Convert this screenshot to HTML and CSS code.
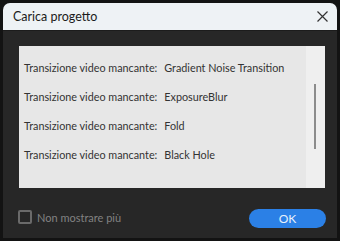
FILE: index.html
```html
<!DOCTYPE html>
<html lang="it">
<head>
    <meta charset="UTF-8">
    <meta name="viewport" content="width=device-width, initial-scale=1.0">
    <title>Carica progetto</title>
    <link rel="stylesheet" href="styles.css">
</head>
<body>
    <div class="dialog">
        <div class="titlebar">
            <span class="title">Carica progetto</span>
            <button class="close" aria-label="Chiudi">
                <svg width="11" height="11" viewBox="0 0 11 11">
                    <path d="M0.5 0.5 L10.5 10.5 M10.5 0.5 L0.5 10.5" stroke="#333" stroke-width="1.2" fill="none"/>
                </svg>
            </button>
        </div>

        <div class="content">
            <div class="list">
                <div class="rows">
                    <div class="row"><span class="label">Transizione video mancante:</span><span class="value">Gradient Noise Transition</span></div>
                    <div class="row"><span class="label">Transizione video mancante:</span><span class="value">ExposureBlur</span></div>
                    <div class="row"><span class="label">Transizione video mancante:</span><span class="value">Fold</span></div>
                    <div class="row"><span class="label">Transizione video mancante:</span><span class="value">Black Hole</span></div>
                </div>
                <div class="scrollbar"><div class="thumb"></div></div>
            </div>

            <div class="footer">
                <label class="check">
                    <span class="box"></span>
                    <span>Non mostrare più</span>
                </label>
                <button class="btn">OK</button>
            </div>
        </div>
    </div>
</body>
</html>
```

FILE: styles.css
```css
body {
    margin: 0;
    background-color: #131313;
    font-family: Lato, "Noto Sans", Arial, sans-serif;
}
.dialog {
    margin: 3px 0 0 3px;
    width: 334px;
    height: 235px;
    background-color: #272727;
    border-radius: 7px 7px 0 0;
    overflow: hidden;
}
.titlebar {
    height: 27px;
    background-color: #eef2f5;
    display: flex;
    align-items: center;
    justify-content: space-between;
    padding: 0 6px 0 10px;
    border-bottom: 1px solid #1c1c1c;
}
.title {
    font-size: 12.5px;
    color: #1b1b1b;
}
.close {
    background: none;
    border: none;
    padding: 0;
    width: 11px;
    height: 11px;
    display: flex;
    margin-right: 3px;
}
.content {
    padding: 15px 12px 0 16px;
}
.list {
    height: 142px;
    background-color: #e7e7e7;
    display: flex;
}
.rows {
    flex: 1;
    padding: 7px 0 0 5px;
}
.row {
    height: 29px;
    display: flex;
    align-items: center;
    font-size: 10.8px;
    color: #333;
    white-space: nowrap;
}
.value {
    margin-left: 7px;
}
.scrollbar {
    width: 19px;
    background-color: #efefef;
    padding-top: 38px;
}
.thumb {
    margin-left: 8px;
    width: 2px;
    height: 65px;
    background-color: #8c8c8c;
}
.footer {
    display: flex;
    justify-content: space-between;
    align-items: flex-start;
    margin-top: 21px;
}
.check {
    display: flex;
    align-items: center;
    gap: 5px;
    margin-left: -1px;
    margin-top: 1px;
    font-size: 11px;
    color: #828282;
}
.box {
    width: 10px;
    height: 10px;
    border: 2px solid #6a6a6a;
    border-radius: 2px;
}
.btn {
    width: 77px;
    height: 19px;
    border: none;
    border-radius: 10px;
    background-color: #2b80e6;
    color: #e8f1fc;
    font-family: Lato, "Noto Sans", Arial, sans-serif;
    font-size: 12px;
    padding: 0;
    margin-right: -1px;
}
```
